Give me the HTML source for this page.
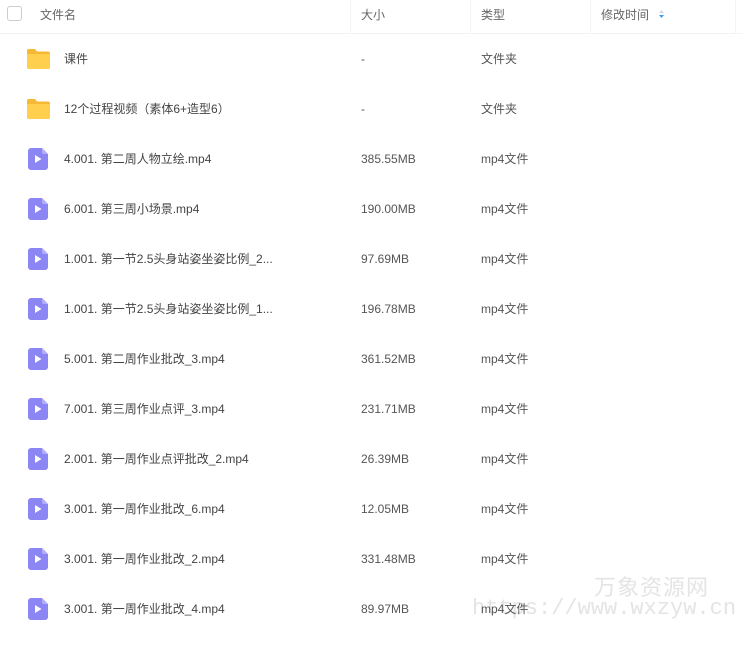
<!DOCTYPE html>
<html><head><meta charset="utf-8"><style>
body{margin:0;width:743px;height:645px;background:#fff;font-family:"Liberation Sans","Noto Sans CJK SC",sans-serif;font-size:12px;color:#424e67;position:relative;overflow:hidden}
.hdr{position:absolute;left:0;top:0;width:743px;height:33px;border-bottom:1px solid #f3f3f5}
.hdr span{position:absolute;top:7px;line-height:16px;color:#666;font-size:12px}
.sep{position:absolute;top:0;width:1px;height:33px;background:#f4f4f6}
.cb{position:absolute;left:7px;top:6px;width:13px;height:13px;border:1px solid #ccc;border-radius:3px}
.row{position:absolute;left:0;width:743px;height:50px}
.row span{position:absolute;top:17px;line-height:16px;color:#444}
.t{left:64px}.s{left:361px;color:#555!important}.y{left:481px;color:#555!important}
.wm{position:absolute;color:#e4e4e4;font-family:"Liberation Sans","Noto Sans CJK SC",sans-serif}
</style></head><body>
<div class="hdr"><div class="cb"></div>
<span style="left:40px">文件名</span><span style="left:361px">大小</span><span style="left:481px">类型</span><span style="left:601px">修改时间</span>
<svg style="position:absolute;left:658px;top:9px" width="7" height="11"><path d="M1 4L3.5 1L6 4Z" fill="#cfd8e6"/><path d="M1 6L3.5 9L6 6Z" fill="#3b9ef5"/></svg>
<div class="sep" style="left:350px"></div><div class="sep" style="left:470px"></div><div class="sep" style="left:590px"></div><div class="sep" style="left:735px"></div>
</div>
<div class="wm" style="left:594px;top:570px;font-size:22px;letter-spacing:1px">万象资源网</div>
<div class="wm" style="left:472px;top:596px;font-size:22px;font-family:'Liberation Mono',monospace;letter-spacing:0">https://www.wxzyw.cn</div>
<div id="rows"></div>
<script>
var d=[["课件","-","文件夹",1],["12个过程视频（素体6+造型6）","-","文件夹",1],["4.001. 第二周人物立绘.mp4","385.55MB"],["6.001. 第三周小场景.mp4","190.00MB"],["1.001. 第一节2.5头身站姿坐姿比例_2...","97.69MB"],["1.001. 第一节2.5头身站姿坐姿比例_1...","196.78MB"],["5.001. 第二周作业批改_3.mp4","361.52MB"],["7.001. 第三周作业点评_3.mp4","231.71MB"],["2.001. 第一周作业点评批改_2.mp4","26.39MB"],["3.001. 第一周作业批改_6.mp4","12.05MB"],["3.001. 第一周作业批改_2.mp4","331.48MB"],["3.001. 第一周作业批改_4.mp4","89.97MB"]];
var h="";d.forEach(function(r,i){var top=34+i*50;
var ic=r[3]?'<svg style="position:absolute;left:26px;top:14px" width="25" height="22"><path d="M2 1h7l2 2.5h11a2 2 0 0 1 2 2V19a2 2 0 0 1-2 2H3a2 2 0 0 1-2-2V3a2 2 0 0 1 1-2z" fill="#f5b936"/><path d="M1 6h23v13a2 2 0 0 1-2 2H3a2 2 0 0 1-2-2z" fill="#ffcf4d"/></svg>'
:'<svg style="position:absolute;left:28px;top:14px" width="20" height="22"><path d="M3 0h11l6 6v13a3 3 0 0 1-3 3H3a3 3 0 0 1-3-3V3a3 3 0 0 1 3-3z" fill="#8c86f4"/><path d="M14 0l6 6h-4a2 2 0 0 1-2-2z" fill="#b3aefa"/><path d="M7 7v8l6.5-4z" fill="#fff"/></svg>';
h+='<div class="row" style="top:'+top+'px">'+ic+'<span class="t">'+r[0]+'</span><span class="s">'+r[1]+'</span><span class="y">'+(r[2]||"mp4文件")+'</span></div>';});
document.getElementById("rows").innerHTML=h;
</script>
</body></html>
